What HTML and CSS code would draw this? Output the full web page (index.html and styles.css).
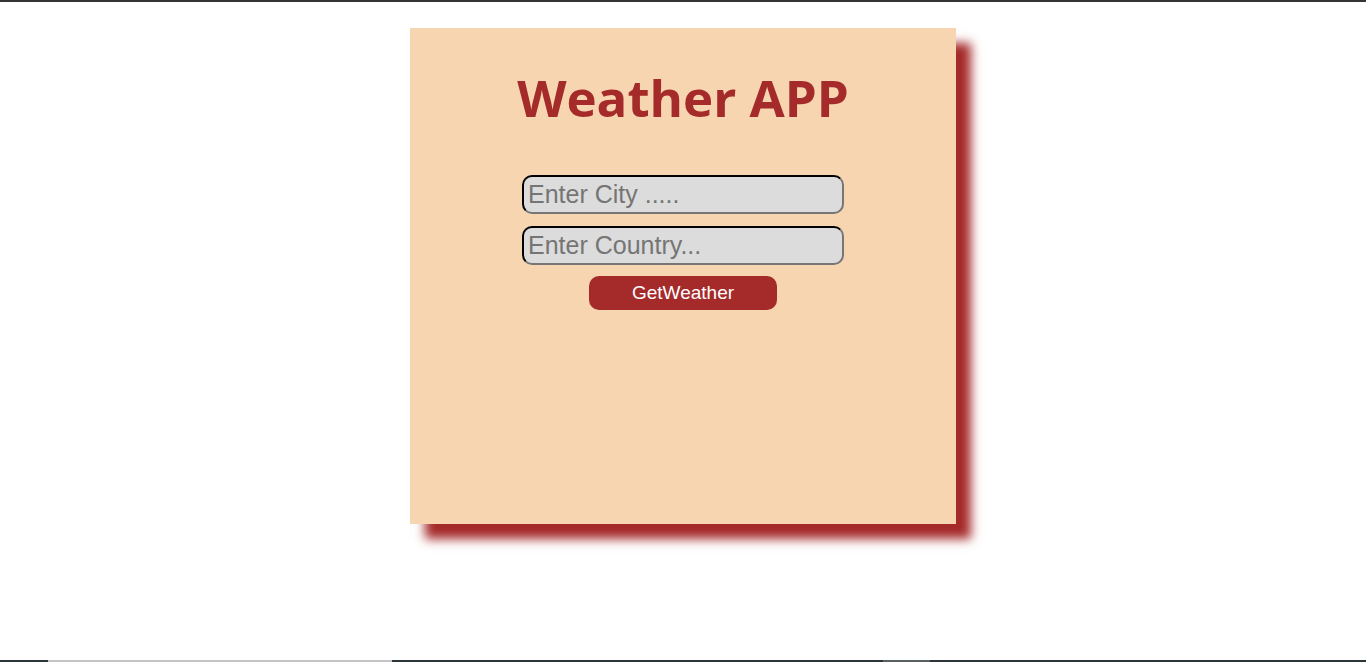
FILE: index.html
```html
<!DOCTYPE html>
<html lang="en">
<head>
<meta charset="utf-8">
<title>Weather APP</title>
<link rel="stylesheet" href="styles.css">
</head>
<body>
<div class="page">
  <div class="topbar"></div>
  <main class="main">
    <section class="card">
      <h1 class="title">Weather APP</h1>
      <form class="form">
        <input class="field" type="text" placeholder="Enter City .....">
        <input class="field" type="text" placeholder="Enter Country...">
        <button class="btn" type="button">GetWeather</button>
      </form>
    </section>
  </main>
  <div class="bottombar">
    <span class="seg seg-a"></span>
    <span class="seg seg-b"></span>
    <span class="seg seg-c"></span>
    <span class="seg seg-d"></span>
  </div>
</div>
</body>
</html>
```

FILE: styles.css
```css
html, body {
  margin: 0;
  padding: 0;
  background: #ffffff;
}

.page {
  height: 662px;
  display: flex;
  flex-direction: column;
  overflow: hidden;
}

.topbar {
  height: 2px;
  background: #343434;
  flex: none;
}

.main {
  flex: 1;
  display: flex;
  justify-content: center;
  align-items: flex-start;
  padding-top: 26px;
}

.card {
  width: 546px;
  height: 496px;
  box-sizing: border-box;
  background: #f6d5b0;
  box-shadow: 15px 15px 10px #a52a2a;
  display: flex;
  flex-direction: column;
  align-items: center;
  padding-top: 37px;
}

.title {
  margin: 0;
  font-family: "Open Sans", "DejaVu Sans", sans-serif;
  font-weight: 700;
  font-size: 51px;
  line-height: 64px;
  color: #a52a2a;
}

.form {
  margin-top: 46px;
  display: flex;
  flex-direction: column;
  align-items: center;
}

.field {
  width: 322px;
  height: 39px;
  box-sizing: border-box;
  background: #dcdcdc;
  border: 2px inset #767676;
  border-top-color: #1e1e1e;
  border-left-color: #1e1e1e;
  border-radius: 10px;
  padding: 0 4px;
  font-family: "Liberation Sans", Arial, sans-serif;
  font-size: 25px;
  color: #333;
  margin: 0 0 12px 0;
  outline: none;
}

.field::placeholder {
  color: #757575;
}

.btn {
  width: 188px;
  height: 34px;
  background: #a52a2a;
  color: #ffffff;
  border: none;
  border-radius: 10px;
  font-family: "Liberation Sans", Arial, sans-serif;
  font-size: 19px;
  margin-top: -1px;
  padding: 0;
  cursor: pointer;
}

.bottombar {
  height: 2px;
  flex: none;
  background: #2b3438;
  display: flex;
}

.seg { display: block; height: 2px; }
.seg-a { width: 48px; }
.seg-b { width: 344px; background: #c4c4c4; }
.seg-c { width: 491px; }
.seg-d { width: 47px; background: #5a5f62; }
```
